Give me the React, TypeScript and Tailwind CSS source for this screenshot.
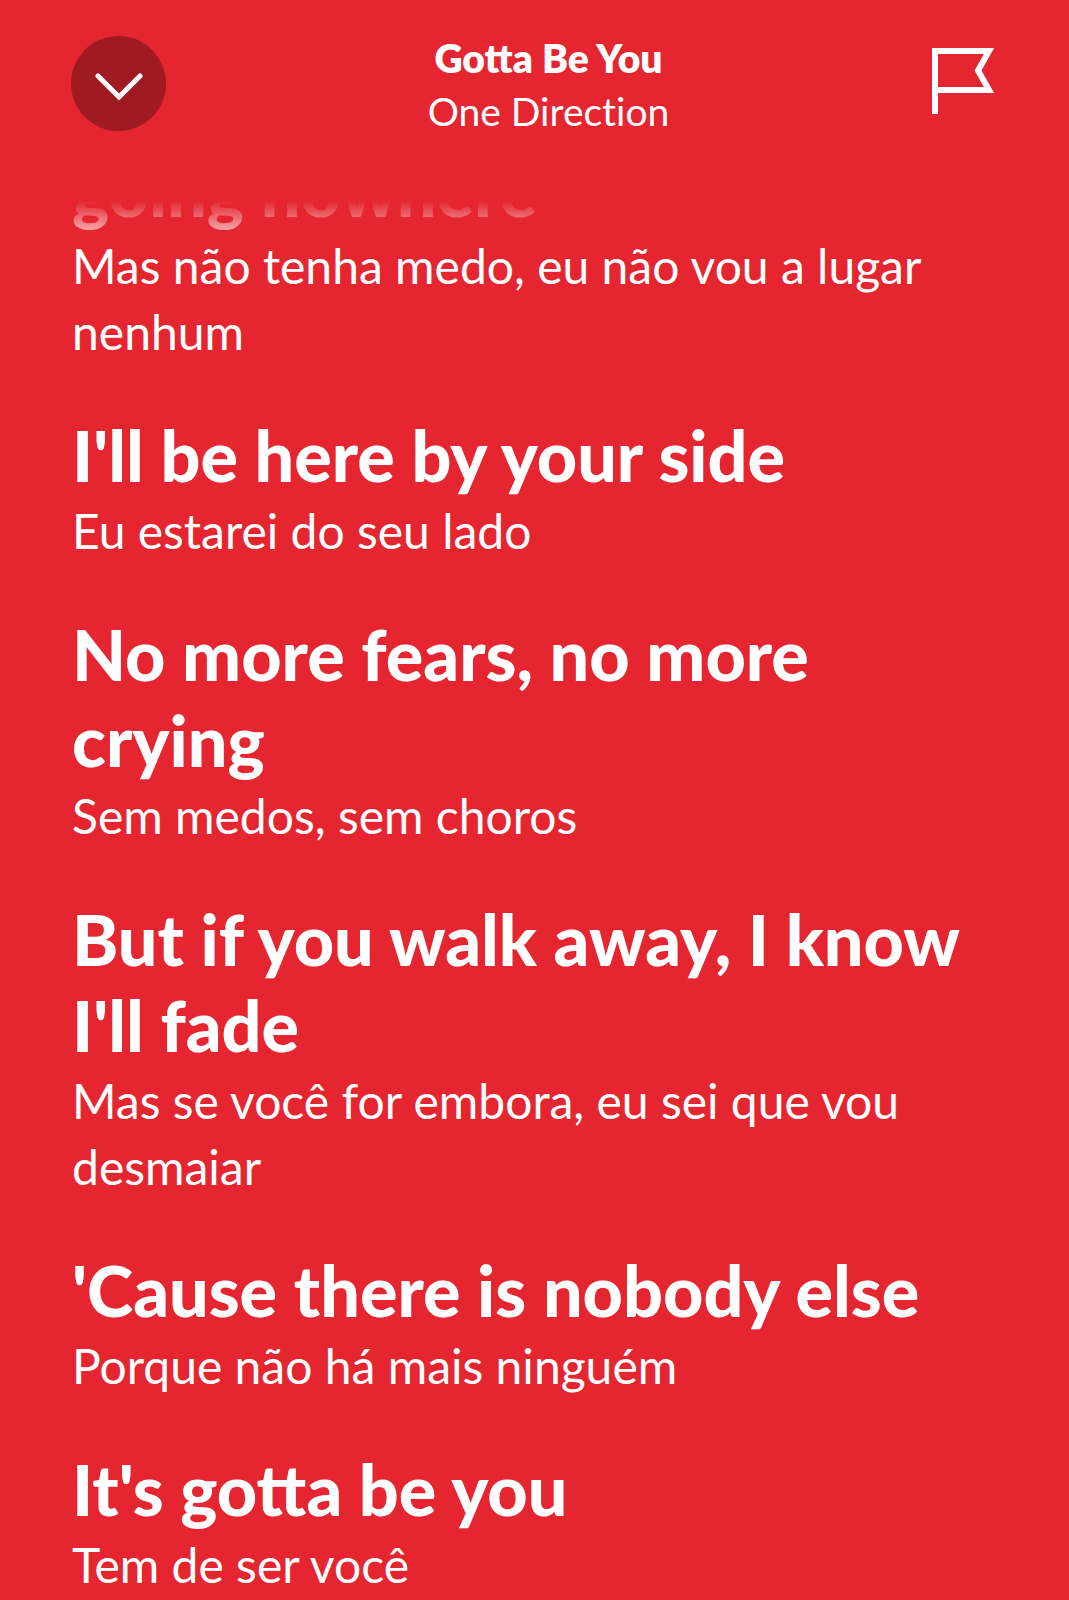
type Lyric = { original: string; translation: string };

const lyrics: Lyric[] = [
  { original: "going nowhere", translation: "Mas não tenha medo, eu não vou a lugar nenhum" },
  { original: "I'll be here by your side", translation: "Eu estarei do seu lado" },
  { original: "No more fears, no more crying", translation: "Sem medos, sem choros" },
  { original: "But if you walk away, I know I'll fade", translation: "Mas se você for embora, eu sei que vou desmaiar" },
  { original: "'Cause there is nobody else", translation: "Porque não há mais ninguém" },
  { original: "It's gotta be you", translation: "Tem de ser você" },
];

function ChevronIcon() {
  return (
    <svg width="48" height="32" viewBox="0 0 48 32" fill="none" aria-hidden="true">
      <path d="M3 6 L24 27 L45 6" stroke="white" strokeWidth="5" strokeLinecap="round" />
    </svg>
  );
}

function FlagIcon() {
  return (
    <svg width="64" height="66" viewBox="0 0 64 66" fill="none" aria-hidden="true">
      <path d="M4 66 V3 H58 L47 22.5 L58 42 H4" stroke="white" strokeWidth="6" strokeMiterlimit="10" />
    </svg>
  );
}

function Header() {
  return (
    <header className="flex h-[201px] shrink-0 items-start justify-between pt-9 pr-[74px] pl-[71px]">
      <button
        type="button"
        aria-label="Close lyrics"
        className="flex size-[95px] items-center justify-center rounded-full bg-[#9f1a21] pt-1"
      >
        <ChevronIcon />
      </button>
      <div className="-mt-1 text-center text-[39px] leading-[53px]">
        <h1 className="font-extrabold">Gotta Be You</h1>
        <p className="[font-variant-ligatures:none]">One Direction</p>
      </div>
      <button type="button" aria-label="Report lyrics" className="pt-3">
        <FlagIcon />
      </button>
    </header>
  );
}

export default function App() {
  return (
    <div className="flex h-screen flex-col overflow-hidden bg-[#e52630] font-['Lato',sans-serif] text-white">
      <Header />
      <main className="relative min-h-0 flex-1 overflow-hidden">
        <ul className="-mt-[54px] flex flex-col gap-[47px] px-[72px]">
          {lyrics.map((line) => (
            <li key={line.original}>
              <p className="text-[70px] leading-[86px] font-black">{line.original}</p>
              <p className="text-[48px] leading-[66px]">{line.translation}</p>
            </li>
          ))}
        </ul>
        <div className="absolute inset-x-0 top-0 h-[50px] bg-linear-to-b from-[#e52630] to-[#e52630]/0" />
      </main>
    </div>
  );
}
